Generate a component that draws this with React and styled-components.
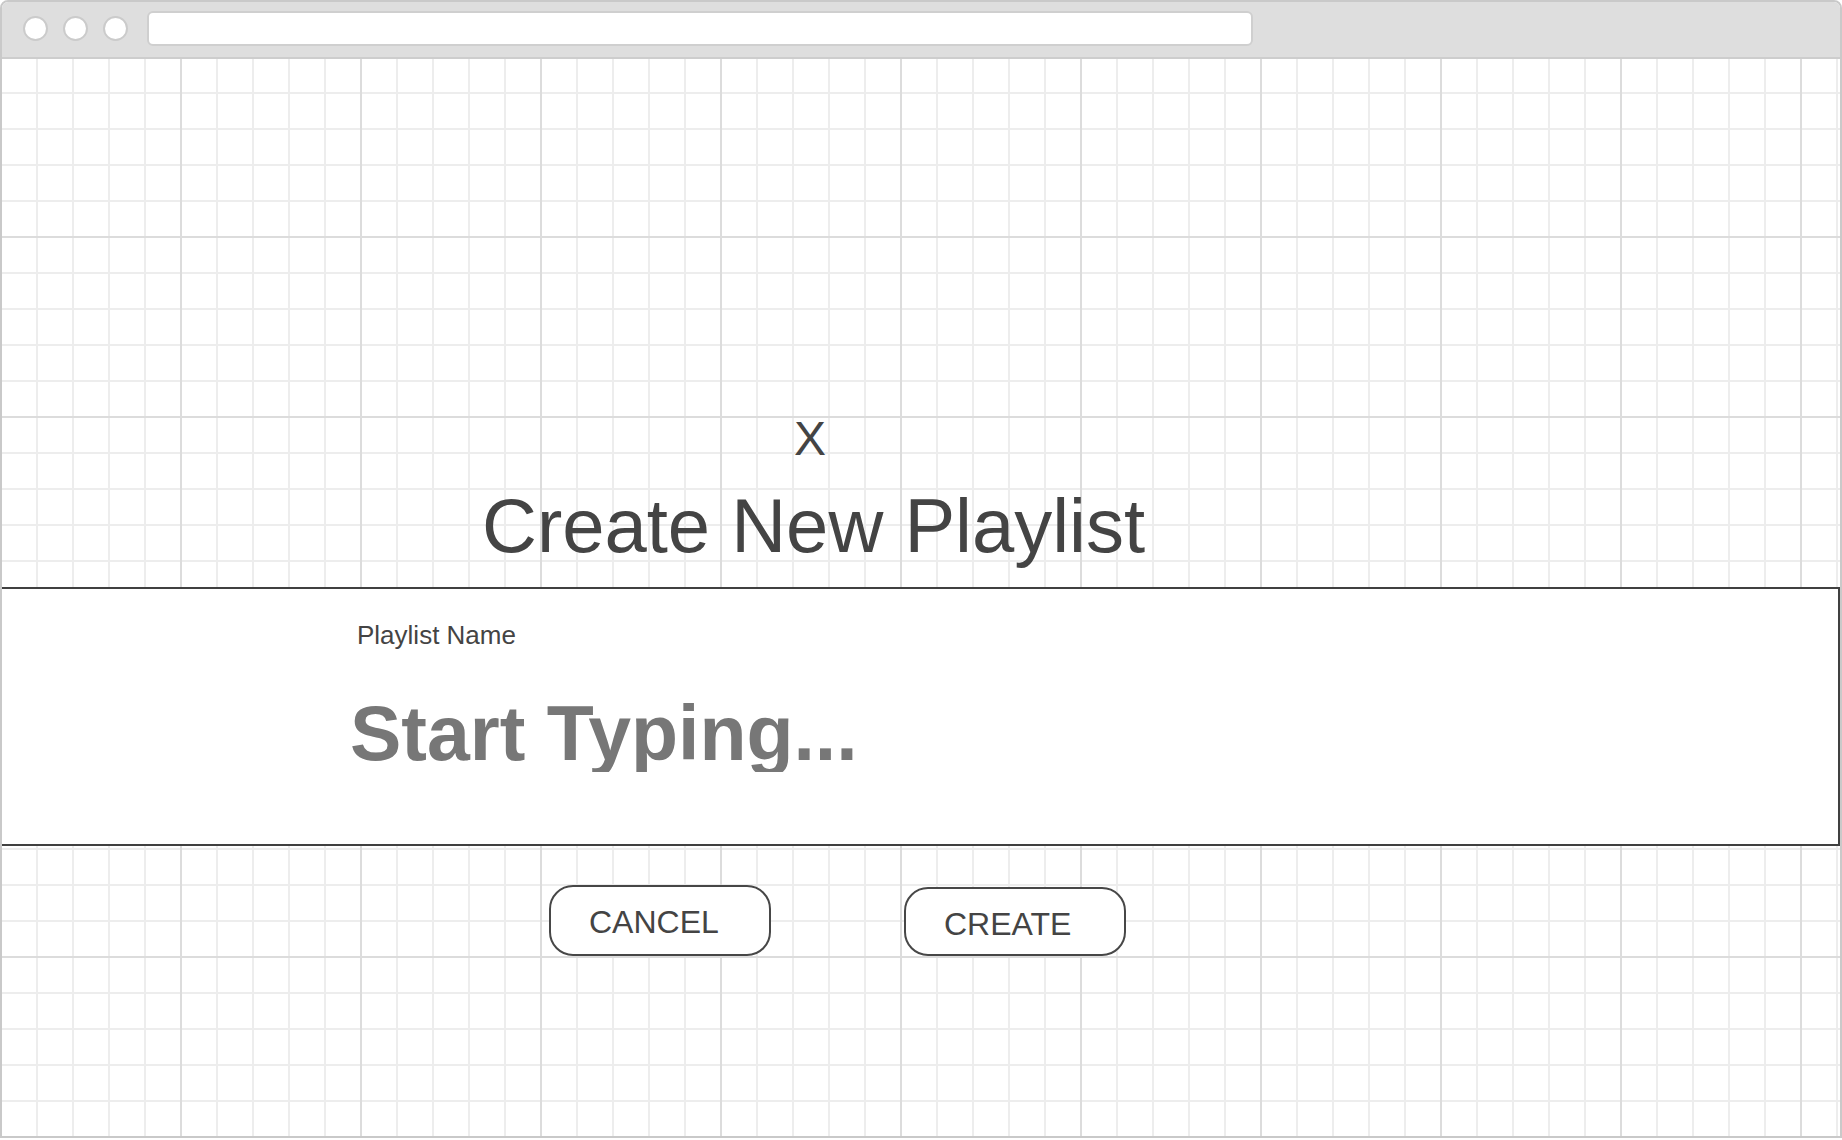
import React, { useState } from 'react';
import styled, { createGlobalStyle } from 'styled-components';

const GlobalStyle = createGlobalStyle`
  html, body {
    margin: 0;
    padding: 0;
    background: #fff;
  }
  body {
    font-family: "Liberation Sans", Arial, sans-serif;
  }
  * {
    box-sizing: border-box;
  }
`;

const StyledWindow = styled.div`
  display: flex;
  flex-direction: column;
  width: 1842px;
  height: 1138px;
  border: 2px solid #c9c9c9;
  border-radius: 8px 8px 0 0;
  overflow: hidden;
  background: #fff;
`;

const StyledTopBar = styled.div`
  display: flex;
  align-items: center;
  flex-shrink: 0;
  height: 57px;
  padding: 0 0 2px 21px;
  background-color: #dedede;
  border-bottom: 2px solid #cdcdcd;
`;

const StyledDot = styled.span`
  width: 25px;
  height: 25px;
  border-radius: 50%;
  background: #fff;
  border: 2px solid #cbcbcb;
  margin-right: ${(p) => p.gap}px;
`;

const StyledAddressBar = styled.div`
  width: 1106px;
  height: 35px;
  background: #fff;
  border: 2px solid #cfcfcf;
  border-radius: 6px;
`;

const StyledCanvas = styled.main`
  flex: 1;
  display: flex;
  flex-direction: column;
  padding-top: 356px;
  background-color: #fff;
  background-image:
    linear-gradient(to right, #dcdcdc 2px, transparent 2px),
    linear-gradient(to bottom, #dcdcdc 2px, transparent 2px),
    linear-gradient(to right, #ededed 2px, transparent 2px),
    linear-gradient(to bottom, #ededed 2px, transparent 2px);
  background-size: 180px 180px, 180px 180px, 36px 36px, 36px 36px;
  background-position: -2px -3px, -2px -3px, -2px -3px, -2px -3px;
  color: #444;
`;

const StyledClose = styled.button`
  align-self: flex-start;
  margin-left: 792px;
  padding: 0;
  border: none;
  background: none;
  font-family: inherit;
  font-size: 48px;
  line-height: 48px;
  color: #444;
  cursor: pointer;
`;

const StyledTitle = styled.h1`
  margin: 25px 0 0 480px;
  font-size: 76px;
  font-weight: 400;
  line-height: 76px;
  color: #444;
`;

const StyledField = styled.label`
  display: flex;
  flex-direction: column;
  width: calc(100% + 2px);
  margin: 23px 0 0 -2px;
  padding: 33px 0 72px 348px;
  background: #fff;
  border: 2px solid #404040;
`;

const StyledLabel = styled.span`
  margin-left: 7px;
  font-size: 26px;
  line-height: 26px;
  color: #444;
`;

const StyledInput = styled.input`
  width: 1100px;
  height: 77px;
  margin-top: 47px;
  padding: 0;
  border: none;
  outline: none;
  background: transparent;
  font-family: inherit;
  font-size: 77px;
  font-weight: 700;
  line-height: 77px;
  color: #444;

  &::placeholder {
    color: #777;
    opacity: 1;
  }
`;

const StyledActions = styled.div`
  display: flex;
  align-items: flex-start;
  gap: 133px;
  margin: 39px 0 0 547px;
`;

const StyledButton = styled.button`
  display: block;
  width: 222px;
  height: ${(p) => p.h}px;
  margin-top: ${(p) => 71 - p.h}px;
  padding: ${(p) => p.top}px 0 ${(p) => p.h - p.top - 36}px 38px;
  text-align: left;
  background: #fff;
  border: 2px solid #474747;
  border-radius: 24px;
  font-family: inherit;
  font-size: 32px;
  line-height: 32px;
  color: #444;
  cursor: pointer;
`;

const App = () => {
  const [name, setName] = useState('');

  return (
    <>
      <GlobalStyle />
      <StyledWindow>
        <StyledTopBar>
          <StyledDot gap={15} />
          <StyledDot gap={15} />
          <StyledDot gap={19} />
          <StyledAddressBar />
        </StyledTopBar>
        <StyledCanvas>
          <StyledClose>X</StyledClose>
          <StyledTitle>Create New Playlist</StyledTitle>
          <StyledField>
            <StyledLabel>Playlist Name</StyledLabel>
            <StyledInput
              value={name}
              onChange={(e) => setName(e.target.value)}
              placeholder="Start Typing..."
            />
          </StyledField>
          <StyledActions>
            <StyledButton h={71} top={19}>CANCEL</StyledButton>
            <StyledButton h={69} top={19}>CREATE</StyledButton>
          </StyledActions>
        </StyledCanvas>
      </StyledWindow>
    </>
  );
};

export default App;
